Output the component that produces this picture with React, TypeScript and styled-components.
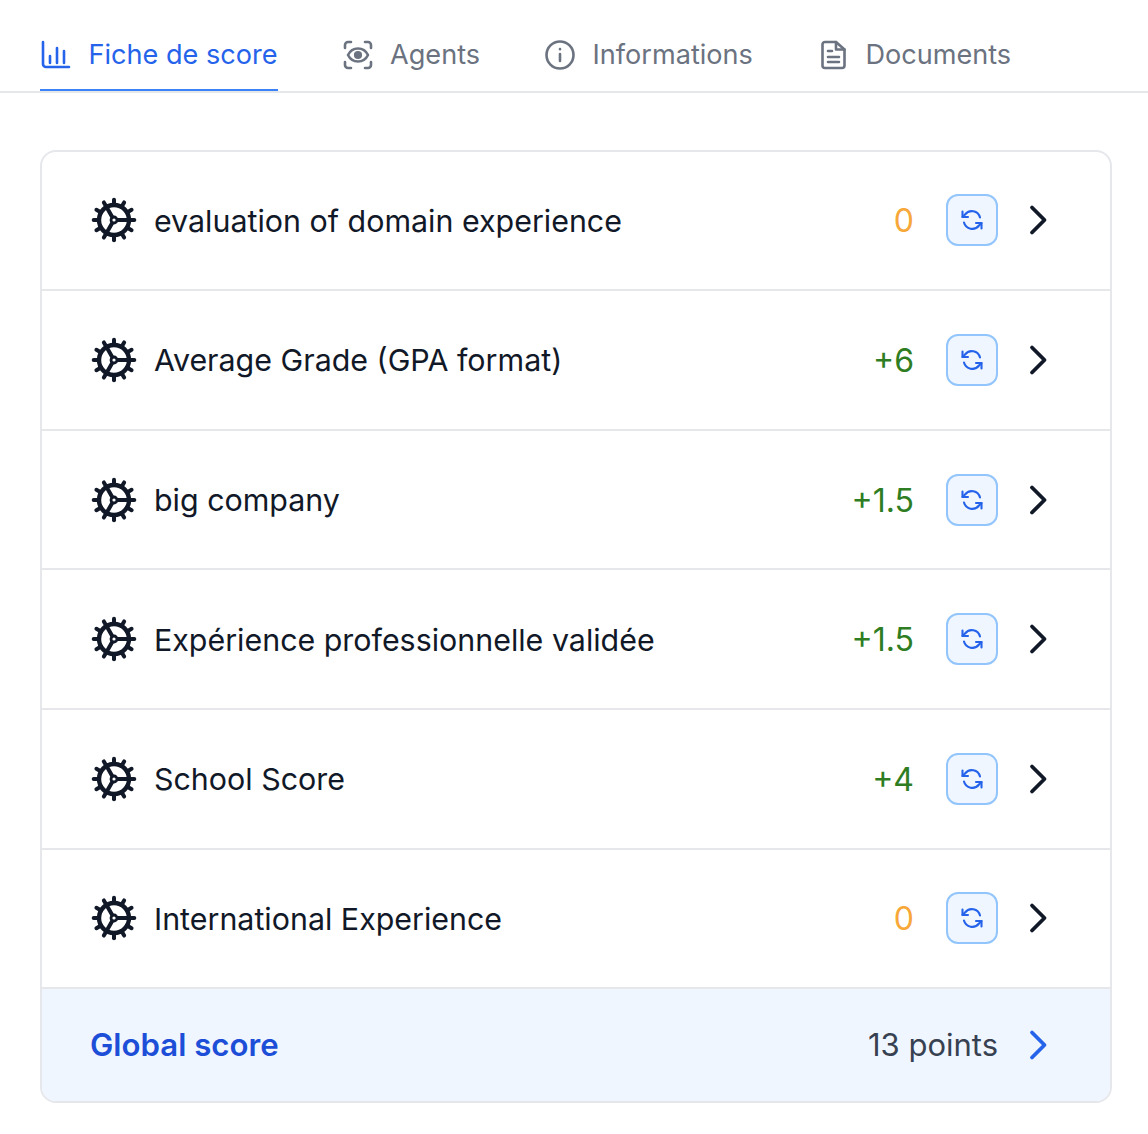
import React from "react";
import styled, { createGlobalStyle } from "styled-components";

const GlobalStyle = createGlobalStyle`
  body {
    margin: 0;
    background: #ffffff;
    font-family: "Inter", "Liberation Sans", sans-serif;
  }
`;

const Page = styled.div`
  width: 1148px;
  height: 1134px;
  box-sizing: border-box;
  overflow: hidden;
`;

const Tabs = styled.nav`
  display: flex;
  gap: 64px;
  height: 93px;
  box-sizing: border-box;
  padding: 0 40px;
  border-bottom: 2px solid #e5e7eb;
`;

const Tab = styled.a<{ $active?: boolean }>`
  display: flex;
  align-items: center;
  gap: 16.5px;
  height: 91px;
  box-sizing: border-box;
  padding-top: 31px;
  padding-bottom: 10px;
  font-size: 27.1px;
  line-height: 32px;
  color: ${(p) => (p.$active ? "#2563eb" : "#6b7280")};
  border-bottom: 2px solid ${(p) => (p.$active ? "#3b82f6" : "transparent")};
`;

const TabIcon = styled.svg`
  width: 32px;
  height: 32px;
  flex: none;
  fill: none;
  stroke: currentColor;
  stroke-width: 2.6;
  stroke-linecap: round;
  stroke-linejoin: round;
`;

const Card = styled.section`
  margin: 56.6px 36px 0 40px;
  border: 2px solid #e5e7eb;
  border-radius: 16px;
  overflow: hidden;
`;

const Row = styled.div`
  display: flex;
  align-items: center;
  height: 139.6px;
  box-sizing: border-box;
  padding: 0 56px 0 48px;
  border-bottom: 2px solid #e5e7eb;
`;

const GearBox = styled.svg`
  width: 48px;
  height: 48px;
  flex: none;
  margin-right: 16px;
  color: #111827;
`;

const Label = styled.span`
  flex: 1;
  padding-top: 1px;
  font-size: 30.4px;
  line-height: 40px;
  color: #111827;
`;

const Score = styled.span<{ $tone: "zero" | "plus" }>`
  padding-top: 2px;
  font-size: 32px;
  line-height: 40px;
  margin-right: 32px;
  color: ${(p) => (p.$tone === "zero" ? "#f7a838" : "#2e7d22")};
`;

const RefreshButton = styled.button`
  display: flex;
  align-items: center;
  justify-content: center;
  width: 52px;
  height: 52px;
  padding: 0;
  margin-right: 24px;
  border: 2px solid #93c5fd;
  border-radius: 12px;
  background: #eff6ff;
  color: #2563eb;
`;

const Chevron = styled.svg<{ $blue?: boolean }>`
  width: 32px;
  height: 32px;
  flex: none;
  fill: none;
  stroke: ${(p) => (p.$blue ? "#2563eb" : "#111827")};
  stroke-width: 3.8;
  stroke-linecap: round;
  stroke-linejoin: round;
`;

const Footer = styled.div`
  display: flex;
  align-items: center;
  height: 112px;
  box-sizing: border-box;
  padding: 0 56px 0 48px;
  background: #eff6ff;
`;

const FooterTitle = styled.span`
  flex: 1;
  font-size: 31.2px;
  font-weight: 600;
  line-height: 40px;
  color: #1d4ed8;
`;

const FooterPoints = styled.span`
  font-size: 31px;
  line-height: 40px;
  margin-right: 24px;
  color: #374151;
`;

const RefreshIcon = () => (
  <svg width="24" height="24" viewBox="0 0 24 24" fill="none" stroke="currentColor" strokeWidth="2.1" strokeLinecap="round" strokeLinejoin="round">
    <path d="M2.5 3.500v5.500h5.500" />
    <path d="M21.500 20.500v-5.500h-5.500" />
    <path d="M20 9.500A8.500 8.500 0 0 0 5 6.500L2.500 9" />
    <path d="M4 14.500A8.500 8.500 0 0 0 19 17.500L21.500 15" />
  </svg>
);

const teeth = Array.from({ length: 12 }, (_, i) => (i * Math.PI) / 6);

const GearIcon = () => (
  <GearBox viewBox="-24 -24 48 48" fill="none" stroke="currentColor">
    <circle r="15" strokeWidth="4.4" />
    {teeth.map((a) => (
      <line
        key={a}
        x1={15 * Math.cos(a)}
        y1={15 * Math.sin(a)}
        x2={20.3 * Math.cos(a)}
        y2={20.3 * Math.sin(a)}
        strokeWidth="4"
        strokeLinecap="round"
      />
    ))}
    <path d="M3 0H15M-1.5 2.6L-7.5 13M-1.5 -2.6L-7.5 -13" strokeWidth="4" />
    <circle r="3" strokeWidth="2.8" fill="#fff" />
  </GearBox>
);

const ChevronIcon = ({ blue }: { blue?: boolean }) => (
  <Chevron $blue={blue} viewBox="0 0 32 32">
    <path d="M10 3.5L22.5 16L10 28.5" />
  </Chevron>
);

const rows: { label: string; score: string }[] = [
  { label: "evaluation of domain experience", score: "0" },
  { label: "Average Grade (GPA format)", score: "+6" },
  { label: "big company", score: "+1.5" },
  { label: "Expérience professionnelle validée", score: "+1.5" },
  { label: "School Score", score: "+4" },
  { label: "International Experience", score: "0" },
];

export default function App() {
  return (
    <Page>
      <GlobalStyle />
      <Tabs>
        <Tab $active>
          <TabIcon viewBox="0 0 32 32">
            <path d="M3 3V25a3 3 0 0 0 3 3H29" />
            <path d="M10 17V24M17 9V24M24 12V24" />
          </TabIcon>
          Fiche de score
        </Tab>
        <Tab>
          <TabIcon viewBox="0 0 32 32">
            <path d="M3 9V6a3 3 0 0 1 3-3h3M23 3h3a3 3 0 0 1 3 3v3M29 23v3a3 3 0 0 1-3 3h-3M9 29H6a3 3 0 0 1-3-3v-3" />
            <path d="M6 16c2.200-4.500 5.700-6.500 10-6.500s7.800 2 10 6.500c-2.200 4.500-5.700 6.500-10 6.500s-7.800-2-10-6.500z" />
            <circle cx="16" cy="16" r="2.800" fill="currentColor" />
          </TabIcon>
          Agents
        </Tab>
        <Tab>
          <TabIcon viewBox="0 0 32 32">
            <circle cx="16" cy="16" r="13.5" />
            <path d="M16 15v7M16 10v.2" />
          </TabIcon>
          Informations
        </Tab>
        <Tab>
          <TabIcon viewBox="0 0 32 32">
            <path d="M19 3H8a2.500 2.500 0 0 0-2.500 2.500v21A2.500 2.500 0 0 0 8 29h17a2.500 2.500 0 0 0 2.500-2.500V10.500z" />
            <path d="M19 3V10.500h8.500" />
            <path d="M11 12h4M11 18h11M11 23h11" />
          </TabIcon>
          Documents
        </Tab>
      </Tabs>
      <Card>
        {rows.map((row) => (
          <Row key={row.label}>
            <GearIcon />
            <Label>{row.label}</Label>
            <Score $tone={row.score === "0" ? "zero" : "plus"}>{row.score}</Score>
            <RefreshButton>
              <RefreshIcon />
            </RefreshButton>
            <ChevronIcon />
          </Row>
        ))}
        <Footer>
          <FooterTitle>Global score</FooterTitle>
          <FooterPoints>13 points</FooterPoints>
          <ChevronIcon blue />
        </Footer>
      </Card>
    </Page>
  );
}
